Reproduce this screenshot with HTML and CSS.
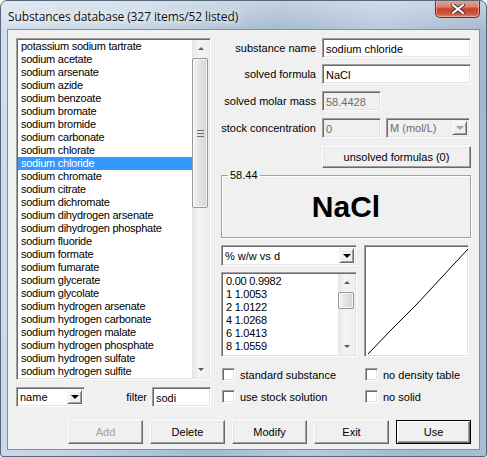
FILE: index.html
```html
<!DOCTYPE html>
<html lang="en">
<head>
    <meta charset="UTF-8">
    <title>Substances database</title>
    <link rel="stylesheet" href="styles.css">
</head>
<body>
    <div class="window">
        <div class="titlebar">
            <span class="title">Substances database (327 items/52 listed)</span>
            <span class="close">
                <svg width="14" height="10" viewBox="0 0 14 10">
                    <path d="M2 1 L12 9 M12 1 L2 9" stroke="#3a3a3a" stroke-width="4" stroke-linecap="square"/>
                    <path d="M2 1 L12 9 M12 1 L2 9" stroke="#ffffff" stroke-width="2" stroke-linecap="square"/>
                </svg>
            </span>
        </div>

        <div class="client">
            <div class="main">
                <div class="left">
                    <div class="listbox sunken">
                        <ul class="items">
                            <li>potassium sodium tartrate</li>
                            <li>sodium acetate</li>
                            <li>sodium arsenate</li>
                            <li>sodium azide</li>
                            <li>sodium benzoate</li>
                            <li>sodium bromate</li>
                            <li>sodium bromide</li>
                            <li>sodium carbonate</li>
                            <li>sodium chlorate</li>
                            <li class="selected">sodium chloride</li>
                            <li>sodium chromate</li>
                            <li>sodium citrate</li>
                            <li>sodium dichromate</li>
                            <li>sodium dihydrogen arsenate</li>
                            <li>sodium dihydrogen phosphate</li>
                            <li>sodium fluoride</li>
                            <li>sodium formate</li>
                            <li>sodium fumarate</li>
                            <li>sodium glycerate</li>
                            <li>sodium glycolate</li>
                            <li>sodium hydrogen arsenate</li>
                            <li>sodium hydrogen carbonate</li>
                            <li>sodium hydrogen malate</li>
                            <li>sodium hydrogen phosphate</li>
                            <li>sodium hydrogen sulfate</li>
                            <li>sodium hydrogen sulfite</li>
                        </ul>
                        <div class="vscroll">
                            <span class="arrow"><span class="tri up"></span></span>
                            <span class="track"><span class="thumb big"><span class="grip"></span></span></span>
                            <span class="arrow"><span class="tri down"></span></span>
                        </div>
                    </div>

                    <div class="filter-row">
                        <div class="combo sunken name-combo">
                            <span class="combo-text">name</span>
                            <span class="combo-btn"><span class="tri-black"></span></span>
                        </div>
                        <span class="filter-label">filter</span>
                        <div class="field sunken filter-field">sodi</div>
                    </div>
                </div>

                <div class="right">
                    <div class="row">
                        <span class="label">substance name</span>
                        <div class="field sunken">sodium chloride</div>
                    </div>
                    <div class="row">
                        <span class="label">solved formula</span>
                        <div class="field sunken">NaCl</div>
                    </div>
                    <div class="row">
                        <span class="label">solved molar mass</span>
                        <div class="field sunken disabled short">58.4428</div>
                    </div>
                    <div class="row">
                        <span class="label">stock concentration</span>
                        <div class="pair">
                            <div class="field sunken disabled short">0</div>
                            <div class="combo sunken disabled unit-combo">
                                <span class="combo-text">M (mol/L)</span>
                                <span class="combo-btn"><span class="tri-black"></span></span>
                            </div>
                        </div>
                    </div>
                    <button class="btn unsolved">unsolved formulas (0)</button>

                    <fieldset class="group">
                        <legend>58.44</legend>
                        <div class="formula">NaCl</div>
                    </fieldset>

                    <div class="density">
                        <div class="density-left">
                            <div class="combo sunken table-combo">
                                <span class="combo-text">% w/w vs d</span>
                                <span class="combo-btn"><span class="tri-black"></span></span>
                            </div>
                            <div class="listbox sunken data-list">
                                <ul class="items">
                                    <li>0.00 0.9982</li>
                                    <li>1 1.0053</li>
                                    <li>2 1.0122</li>
                                    <li>4 1.0268</li>
                                    <li>6 1.0413</li>
                                    <li>8 1.0559</li>
                                </ul>
                                <div class="vscroll">
                                    <span class="arrow"><span class="tri up"></span></span>
                                    <span class="track"><span class="thumb"></span></span>
                                    <span class="arrow"><span class="tri down"></span></span>
                                </div>
                            </div>
                        </div>
                        <div class="graph sunken">
                            <svg width="102" height="107" viewBox="0 0 102 107">
                                <polyline points="1,106 25,81 50,56 75,29 101,1" fill="none" stroke="#000" stroke-width="1"/>
                            </svg>
                        </div>
                    </div>

                    <div class="checks">
                        <label class="check"><span class="box sunken"></span>standard substance</label>
                        <label class="check"><span class="box sunken"></span>no density table</label>
                        <label class="check"><span class="box sunken"></span>use stock solution</label>
                        <label class="check"><span class="box sunken"></span>no solid</label>
                    </div>
                </div>
            </div>

            <div class="buttons">
                <button class="btn" disabled>Add</button>
                <button class="btn">Delete</button>
                <button class="btn">Modify</button>
                <button class="btn">Exit</button>
                <button class="btn default">Use</button>
            </div>
        </div>
    </div>
</body>
</html>
```

FILE: styles.css
```css
body {
    margin: 0;
    background: #ffffff;
    font-family: "Liberation Sans", Arial, sans-serif;
    font-size: 11px;
    color: #000;
}

.window {
    width: 487px;
    height: 457px;
    box-sizing: border-box;
    border: 1px solid #56677a;
    border-radius: 7px 7px 3px 3px;
    background:
        linear-gradient(to bottom, rgba(255, 255, 255, 0.35), rgba(255, 255, 255, 0) 30px),
        linear-gradient(100deg, #d2dfec 0%, #c3d4e5 25%, #a5bacf 50%, #b8cadc 68%, #a3b8cd 88%, #aabed3 100%);
    overflow: hidden;
}

.titlebar {
    height: 28px;
    display: flex;
    justify-content: space-between;
    align-items: flex-start;
}

.title {
    margin: 7px 0 0 7px;
    font-family: "Open Sans", "Liberation Sans", sans-serif;
    font-size: 12px;
    letter-spacing: -0.1px;
    color: #111;
    text-shadow: 0 0 6px #ffffff, 0 0 10px #ffffff;
}

.close {
    width: 45px;
    height: 18px;
    margin: -1px 6px 0 0;
    box-sizing: border-box;
    border: 1px solid #6d2c22;
    border-top: none;
    border-radius: 0 0 5px 5px;
    background: linear-gradient(to bottom, #e9a594 0%, #d8836f 40%, #c5432c 52%, #cd563f 80%, #e0856c 100%);
    box-shadow: inset 0 0 0 1px rgba(255, 210, 200, 0.5);
    display: flex;
    align-items: center;
    justify-content: center;
}

.client {
    margin: 0 6px 6px;
    height: 421px;
    box-sizing: border-box;
    border: 1px solid #7f90a4;
    background: #f0f0f0;
    padding: 8px 8px 5px 8px;
    display: flex;
    flex-direction: column;
}

.main {
    display: flex;
    gap: 10px;
    height: 369px;
}

/* 3d borders */
.sunken {
    box-sizing: border-box;
    border: 1px solid;
    border-color: #a0a0a0 #ffffff #ffffff #a0a0a0;
    box-shadow: inset 1px 1px 0 #696969, inset -1px -1px 0 #e3e3e3;
    background: #fff;
}

.btn {
    box-sizing: border-box;
    width: 75px;
    height: 24px;
    padding: 0;
    font-family: inherit;
    font-size: 11px;
    color: #000;
    background: #f0f0f0;
    border: 1px solid;
    border-color: #ffffff #696969 #696969 #ffffff;
    box-shadow: inset -1px -1px 0 #a0a0a0, inset 1px 1px 0 #e3e3e3;
}

.btn:disabled {
    color: #a0a0a0;
}

.btn.default {
    border: 1px solid #000;
    box-shadow: inset 1px 1px 0 #fff, inset -1px -1px 0 #696969, inset -2px -2px 0 #a0a0a0;
}

/* left column */
.left {
    width: 195px;
    display: flex;
    flex-direction: column;
}

.listbox {
    display: flex;
    padding: 1px;
    overflow: hidden;
}

.left .listbox {
    height: 342px;
    flex-shrink: 0;
}

.items {
    list-style: none;
    margin: 0;
    padding: 0;
    flex: 1;
    overflow: hidden;
    letter-spacing: -0.25px;
}

.items li {
    height: 13px;
    line-height: 13px;
    padding-left: 3px;
    white-space: nowrap;
}

.items li.selected {
    background: #3399ff;
    color: #fff;
}

.vscroll {
    width: 17px;
    display: flex;
    flex-direction: column;
    background: linear-gradient(to right, #e6e6e6, #f4f4f4 40%, #eeeeee);
}

.arrow {
    height: 17px;
    display: flex;
    align-items: center;
    justify-content: center;
}

.tri {
    width: 0;
    height: 0;
    border-left: 3px solid transparent;
    border-right: 3px solid transparent;
}

.tri.up {
    border-bottom: 3px solid #5a5a5a;
}

.tri.down {
    border-top: 3px solid #5a5a5a;
}

.track {
    flex: 1;
    padding-top: 1px;
}

.thumb {
    display: flex;
    align-items: center;
    justify-content: center;
    box-sizing: border-box;
    width: 16px;
    height: 17px;
    border: 1px solid #979797;
    border-radius: 2px;
    background: linear-gradient(to right, #f4f4f4, #e2e2e2 50%, #d4d4d4);
    box-shadow: inset 0 0 0 1px rgba(255, 255, 255, 0.7);
}

.thumb.big {
    height: 150px;
}

.grip {
    width: 7px;
    height: 1px;
    background: #6f6f6f;
    box-shadow: 0 -3px 0 #6f6f6f, 0 3px 0 #6f6f6f;
}

.filter-row {
    margin-top: 7px;
    display: flex;
    align-items: center;
    height: 20px;
}

.combo {
    display: flex;
    align-items: center;
    padding: 2px;
}

.combo-text {
    flex: 1;
    padding-left: 1px;
    white-space: nowrap;
    overflow: hidden;
}

.combo-btn {
    box-sizing: border-box;
    width: 15px;
    align-self: stretch;
    background: #f0f0f0;
    border: 1px solid;
    border-color: #f0f0f0 #696969 #696969 #f0f0f0;
    box-shadow: inset 1px 1px 0 #fff, inset -1px -1px 0 #a0a0a0;
    display: flex;
    align-items: center;
    justify-content: center;
}

.tri-black {
    width: 0;
    height: 0;
    border-left: 4px solid transparent;
    border-right: 4px solid transparent;
    border-top: 4px solid #000;
}

.name-combo {
    width: 69px;
    height: 20px;
}

.filter-label {
    margin-left: auto;
    margin-right: 5px;
}

.filter-field {
    width: 59px;
}

.field {
    height: 20px;
    line-height: 16px;
    padding: 2px 3px;
}

.field.disabled,
.combo.disabled {
    background: #f0f0f0;
    color: #6d6d6d;
}

.combo.disabled .tri-black {
    border-top-color: #a0a0a0;
}

/* right column */
.right {
    width: 250px;
    display: flex;
    flex-direction: column;
}

.row {
    display: grid;
    grid-template-columns: 95px 1fr;
    column-gap: 6px;
    align-items: center;
    margin-bottom: 6px;
}

.row + .row + .row {
    margin-top: 1px;
}

.label {
    text-align: right;
    white-space: nowrap;
}

.field.short {
    width: 59px;
}

.pair {
    display: flex;
    gap: 5px;
}

.unit-combo {
    width: 84px;
    height: 20px;
}

.unsolved {
    width: 149px;
    height: 22px;
    margin: 2px 0 0 101px;
}

.group {
    margin: 1px 0 0;
    padding: 0;
    border: 1px solid #a0a0a0;
    box-shadow: inset 1px 1px 0 #fff, 1px 1px 0 #fff;
    min-width: 0;
}

.group legend {
    margin-left: 6px;
    padding: 0 2px;
    line-height: 13px;
}

.formula {
    height: 49px;
    line-height: 49px;
    margin-bottom: 6px;
    text-align: center;
    font-size: 30px;
    font-weight: bold;
}

.density {
    margin-top: 7px;
    display: flex;
    gap: 7px;
    height: 112px;
}

.density-left {
    width: 136px;
    display: flex;
    flex-direction: column;
    gap: 6px;
}

.table-combo {
    height: 21px;
}

.data-list {
    flex: 1;
}

.data-list .items {
    padding-top: 1px;
}

.graph {
    width: 105px;
    padding: 2px;
}

.graph svg {
    display: block;
}

.checks {
    margin-top: 11px;
    display: grid;
    grid-template-columns: 143px 1fr;
    row-gap: 9px;
    padding-left: 1px;
}

.check {
    display: flex;
    align-items: center;
    gap: 5px;
    height: 13px;
    white-space: nowrap;
}

.box {
    width: 13px;
    height: 13px;
}

.buttons {
    margin-top: auto;
    display: flex;
    justify-content: flex-end;
    gap: 7px;
}
```
